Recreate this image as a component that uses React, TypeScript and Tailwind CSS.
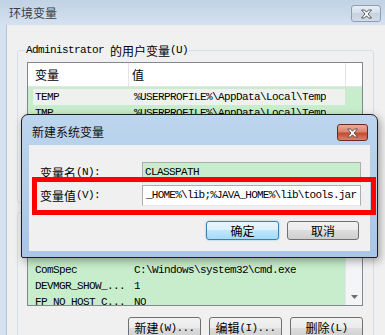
import React from "react";

const M = ({ children, className = "" }: { children: React.ReactNode; className?: string }) => (
  <span className={"font-['Liberation_Mono',monospace] text-[11px] tracking-[-0.6px] " + className}>{children}</span>
);

const XGlyph = () => (
  <svg width="13" height="10" viewBox="0 0 13 10">
    <path
      d="M1.5 1 L4.5 1 L6.5 3.2 L8.5 1 L11.5 1 L8 5 L11.5 9 L8.5 9 L6.5 6.8 L4.5 9 L1.5 9 L5 5 Z"
      fill="#ffffff"
      stroke="#4a4a4a"
      strokeWidth="0.9"
      strokeLinejoin="round"
    />
  </svg>
);

const Btn = ({ children, primary = false, className = "" }: { children: React.ReactNode; primary?: boolean; className?: string }) => (
  <div
    className={
      (primary
        ? "border-[#3c7fb1] bg-[linear-gradient(#eaf6fd,#d9f0fc_50%,#bee6fd_50%,#a7d9f5)] shadow-[0_0_2px_#6cc0f0] "
        : "border-[#707070] bg-[linear-gradient(#f2f2f2,#ebebeb_50%,#dddddd_50%,#cfcfcf)] ") +
      "border rounded-[3px] flex items-center justify-center leading-[14px] " +
      className
    }
  >
    {children}
  </div>
);

const Row = ({ name, value, selected = false }: { name: string; value: string; selected?: boolean }) => (
  <div className="h-[16px] flex">
    <div className={(selected ? "bg-[#eef1ee] " : "") + "ml-[5px] w-[312px] flex items-center leading-[16px]"}>
      <M className="w-[95px] pl-[2px] whitespace-nowrap overflow-hidden">{name}</M>
      <M className="pl-[6px] whitespace-nowrap overflow-hidden">{value}</M>
    </div>
  </div>
);

const Header = () => (
  <div className="h-[24px] bg-white flex border-b border-[#e5e5e5]">
    <div className="w-[101px] border-r border-[#e5e5e5] pl-[7px] flex items-center">变量</div>
    <div className="w-[217px] border-r border-[#e5e5e5] pl-[3px] flex items-center">值</div>
    <div className="flex-1" />
  </div>
);

export default function App() {
  return (
    <div className="relative w-[385px] h-[335px] overflow-hidden bg-[#f0f0f0] text-black font-['Noto_Sans_CJK_SC',sans-serif] text-[12px]">
      {/* outer window title bar */}
      <div className="h-[25px] flex items-start justify-between pl-[9px] pr-[4px] bg-[linear-gradient(#c1d2e6,#d4e1ef)]">
        <span className="mt-[5px] leading-[16px] text-[#3c3c3c]">环境变量</span>
        <div className="mt-[5px] w-[30px] h-[17px] rounded-[3px] border border-[#8e9db2] bg-[linear-gradient(#e6edf5,#d3dde9_50%,#c5d2e1_50%,#d2dce8)] flex items-center justify-center">
          <XGlyph />
        </div>
      </div>

      <div className="flex h-[310px]">
        <div className="w-[7px] bg-[#d4e1ef] border-r border-[#b5c4d6]" />
        <div className="flex-1 bg-[#f0f0f0] pl-[10px] pr-[11px] overflow-hidden">
          {/* user variables group */}
          <div className="mt-[25px] h-[153px] border border-[#d5dfe5] rounded-[3px]">
            <div className="ml-[7px] -mt-[8px] w-fit px-[1px] bg-[#f0f0f0] h-[15px] flex items-center">
              <M>Administrator</M>
              <span className="ml-[6px]">的用户变量</span>
              <M>(U)</M>
            </div>
            <div className="ml-[9px] mr-[10px] mt-[4px] h-[104px] border border-[#828790] bg-[#c7edcc] overflow-hidden">
              <Header />
              <div className="pt-[2px]">
                <Row name="TEMP" value={"%USERPROFILE%\\AppData\\Local\\Temp"} selected />
                <Row name="TMP" value={"%USERPROFILE%\\AppData\\Local\\Temp"} />
              </div>
            </div>
          </div>

          {/* system variables group */}
          <div className="mt-[9px] h-[140px] border border-[#d5dfe5] rounded-[3px]">
            <div className="ml-[7px] -mt-[8px] w-fit px-[1px] bg-[#f0f0f0] h-[15px] flex items-center">
              <span>系统变量</span>
              <M>(S)</M>
            </div>
            <div className="ml-[9px] mr-[10px] h-[86px] border border-[#828790] bg-[#c7edcc] overflow-hidden flex">
              <div className="w-[317px]">
                <div className="h-[25px] bg-white flex border-b border-[#e5e5e5]">
                  <div className="w-[101px] border-r border-[#e5e5e5] pl-[7px] flex items-center">变量</div>
                  <div className="flex-1 pl-[3px] flex items-center">值</div>
                </div>
                <div className="h-[16px]" />
                <Row name="ComSpec" value={"C:\\Windows\\system32\\cmd.exe"} />
                <Row name="DEVMGR_SHOW_..." value="1" />
                <Row name="FP_NO_HOST_C..." value="NO" />
              </div>
              <div className="w-[17px] bg-[#f4f5f6] border-l border-[#e4e6e8] flex flex-col justify-end">
                <div className="h-[17px] flex items-center justify-center">
                  <svg width="7" height="4" viewBox="0 0 7 4">
                    <path d="M0 0 L7 0 L3.5 4 Z" fill="#6e6e6e" />
                  </svg>
                </div>
              </div>
            </div>
            <div className="mr-[10px] mt-[11px] flex justify-end gap-[8px]">
              <Btn className="w-[73px] h-[22px]">新建<M>(W)...</M></Btn>
              <Btn className="w-[73px] h-[22px]">编辑<M>(I)...</M></Btn>
              <Btn className="w-[73px] h-[22px]">删除<M>(L)</M></Btn>
            </div>
          </div>
        </div>
      </div>

      {/* dialog: 新建系统变量 */}
      <div className="absolute left-[21px] top-[114px] w-[357px] h-[144px] border border-[#1e1e1e] rounded-t-[7px] rounded-b-[2px] bg-[linear-gradient(#bdd5ee,#a9c6e7)] flex flex-col shadow-[2px_3px_8px_rgba(0,0,0,0.35)]">
        <div className="h-[30px] flex items-start justify-between pl-[10px] pr-[9px]">
          <span className="mt-[9px] leading-[16px] text-[#101010]">新建系统变量</span>
          <div className="mt-[9px] w-[31px] h-[17px] rounded-[3px] border border-[#6b2a20] bg-[linear-gradient(#eaaa9b,#d8826e_48%,#c4472d_52%,#d8826a)] flex items-center justify-center">
            <XGlyph />
          </div>
        </div>
        <div className="mx-[7px] mb-[6px] flex-1 bg-[#f0f0f0] pt-[17px] pl-[11px] pr-[9px]">
          <div className="h-[21px] flex items-center">
            <div className="w-[102px] flex items-center">
              变量名<M>(N):</M>
            </div>
            <div className="flex-1 h-full bg-[#c7edcc] border border-[#abadb3] border-b-[#e3e9ef] pl-[2px] flex items-center overflow-hidden">
              <M>CLASSPATH</M>
            </div>
          </div>
          <div className="mt-[2px] h-[21px] flex items-center">
            <div className="w-[102px] flex items-center">
              变量值<M>(V):</M>
            </div>
            <div className="flex-1 h-full bg-white border border-[#abadb3] border-b-[#e3e9ef] pl-[3px] flex items-center overflow-hidden whitespace-nowrap">
              <M className="!tracking-[-0.76px]">{"_HOME%\\lib;%JAVA_HOME%\\lib\\tools.jar"}</M>
            </div>
          </div>
          <div className="mt-[15px] mr-[2px] flex justify-end gap-[8px]">
            <Btn primary className="w-[73px] h-[19px]">确定</Btn>
            <Btn className="w-[72px] h-[19px]">取消</Btn>
          </div>
        </div>
      </div>

      {/* red annotation box */}
      <div className="absolute left-[32px] top-[177px] w-[344px] h-[38px] border-[5px] border-[#ff0000]" />
    </div>
  );
}
